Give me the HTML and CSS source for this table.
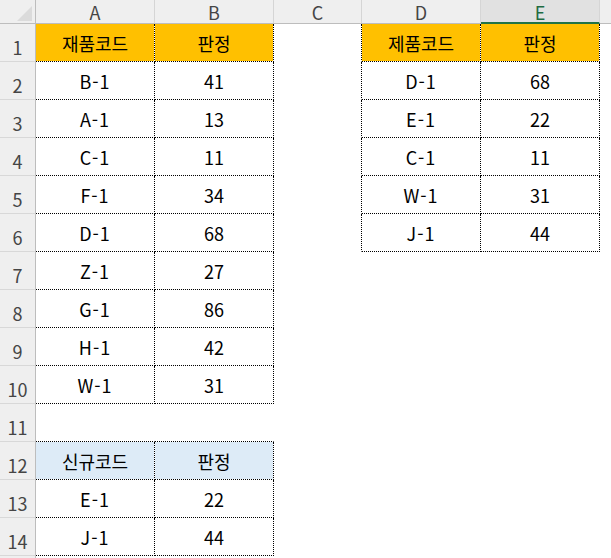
FILE: index.html
```html
<!DOCTYPE html>
<html lang="ko">
<head>
<meta charset="utf-8">
<link rel="stylesheet" href="styles.css">
</head>
<body>
<div class="sheet">
  <div class="corner"><span class="tri"></span></div>
  <div class="colh">A</div>
  <div class="colh">B</div>
  <div class="colh">C</div>
  <div class="colh">D</div>
  <div class="colh sel">E</div>
  <div class="colh last"></div>

  <div class="rowh">1</div>
  <div class="c t orange">재품코드</div>
  <div class="c t orange">판정</div>
  <div class="c edge"></div>
  <div class="c t orange">제품코드</div>
  <div class="c t orange">판정</div>
  <div class="c"></div>

  <div class="rowh">2</div>
  <div class="c t code">B-1</div>
  <div class="c t">41</div>
  <div class="c edge"></div>
  <div class="c t code">D-1</div>
  <div class="c t">68</div>
  <div class="c"></div>

  <div class="rowh">3</div>
  <div class="c t code">A-1</div>
  <div class="c t">13</div>
  <div class="c edge"></div>
  <div class="c t code">E-1</div>
  <div class="c t">22</div>
  <div class="c"></div>

  <div class="rowh">4</div>
  <div class="c t code">C-1</div>
  <div class="c t">11</div>
  <div class="c edge"></div>
  <div class="c t code">C-1</div>
  <div class="c t">11</div>
  <div class="c"></div>

  <div class="rowh">5</div>
  <div class="c t code">F-1</div>
  <div class="c t">34</div>
  <div class="c edge"></div>
  <div class="c t code">W-1</div>
  <div class="c t">31</div>
  <div class="c"></div>

  <div class="rowh">6</div>
  <div class="c t code">D-1</div>
  <div class="c t">68</div>
  <div class="c edge"></div>
  <div class="c t code">J-1</div>
  <div class="c t">44</div>
  <div class="c"></div>

  <div class="rowh">7</div>
  <div class="c t code">Z-1</div>
  <div class="c t">27</div>
  <div class="c"></div>
  <div class="c"></div>
  <div class="c"></div>
  <div class="c"></div>

  <div class="rowh">8</div>
  <div class="c t code">G-1</div>
  <div class="c t">86</div>
  <div class="c"></div>
  <div class="c"></div>
  <div class="c"></div>
  <div class="c"></div>

  <div class="rowh">9</div>
  <div class="c t code">H-1</div>
  <div class="c t">42</div>
  <div class="c"></div>
  <div class="c"></div>
  <div class="c"></div>
  <div class="c"></div>

  <div class="rowh">10</div>
  <div class="c t code">W-1</div>
  <div class="c t">31</div>
  <div class="c"></div>
  <div class="c"></div>
  <div class="c"></div>
  <div class="c"></div>

  <div class="rowh">11</div>
  <div class="c above"></div>
  <div class="c above"></div>
  <div class="c"></div>
  <div class="c"></div>
  <div class="c"></div>
  <div class="c"></div>

  <div class="rowh">12</div>
  <div class="c t blue">신규코드</div>
  <div class="c t blue">판정</div>
  <div class="c"></div>
  <div class="c"></div>
  <div class="c"></div>
  <div class="c"></div>

  <div class="rowh">13</div>
  <div class="c t code">E-1</div>
  <div class="c t">22</div>
  <div class="c"></div>
  <div class="c"></div>
  <div class="c"></div>
  <div class="c"></div>

  <div class="rowh">14</div>
  <div class="c t code">J-1</div>
  <div class="c t">44</div>
  <div class="c"></div>
  <div class="c"></div>
  <div class="c"></div>
  <div class="c"></div>

  <div class="rowh"></div>
  <div class="c"></div>
  <div class="c"></div>
  <div class="c"></div>
  <div class="c"></div>
  <div class="c"></div>
  <div class="c"></div>
</div>
</body>
</html>
```

FILE: styles.css
```css
html, body {
  margin: 0;
  padding: 0;
  background: #ffffff;
  overflow: hidden;
}

.sheet {
  display: grid;
  grid-template-columns: 36px 119px 119px 88px 119px 119px 1fr;
  grid-template-rows: 24px repeat(14, 38px) 2px;
  width: 611px;
  height: 558px;
  overflow: hidden;
  font-family: "Noto Sans CJK KR", "Noto Sans", sans-serif;
  font-size: 18px;
  color: #000;
}

.corner {
  background: #efefef;
  border-right: 1px solid #bdbdbd;
  border-bottom: 1px solid #bdbdbd;
  box-sizing: border-box;
  position: relative;
}

.corner .tri {
  position: absolute;
  left: 17px;
  top: 6px;
  width: 15px;
  height: 15px;
  background: #dbdbdb;
  clip-path: polygon(100% 0, 100% 100%, 0 100%);
}

.colh {
  background: #efefef;
  border-right: 1px solid #d5d5d5;
  border-bottom: 1px solid #bdbdbd;
  box-sizing: border-box;
  display: flex;
  align-items: center;
  justify-content: center;
  color: #454545;
  font-size: 18px;
  line-height: 1;
  padding-top: 1px;
}

.colh.sel {
  background: #e1e1e1;
  border-bottom: 2px solid #217346;
  color: #1f6b41;
  padding-top: 2px;
}

.colh.last {
  border-right: none;
}

.rowh {
  background: #efefef;
  border-right: 1px solid #bdbdbd;
  border-bottom: 1px solid #d8d8d8;
  box-sizing: border-box;
  display: flex;
  align-items: flex-end;
  justify-content: center;
  color: #454545;
  font-size: 18px;
  line-height: 1;
  padding-bottom: 5px;
}

.c {
  box-sizing: border-box;
  border-right: 1px solid transparent;
  border-bottom: 1px solid transparent;
  background-clip: padding-box;
  display: flex;
  align-items: center;
  justify-content: center;
  line-height: 1;
  padding-top: 1px;
}

.c.code {
  letter-spacing: 1px;
}

.c.t {
  border-right: 1px dotted #000;
  border-bottom: 1px dotted #000;
}

.c.edge {
  border-right: 1px dotted #000;
}

.c.above {
  border-bottom: 1px dotted #000;
}

.orange {
  background-color: #ffc000;
}

.blue {
  background-color: #ddebf7;
}
```
